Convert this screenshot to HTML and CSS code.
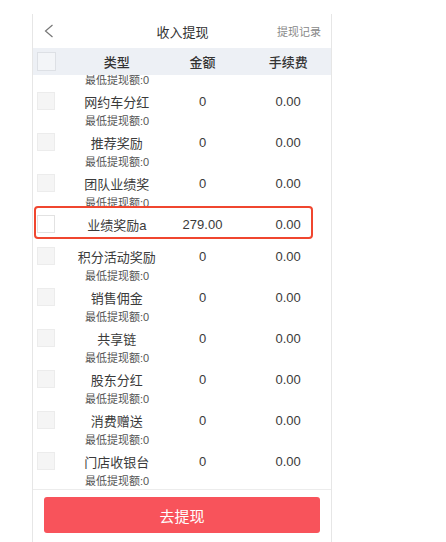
FILE: index.html
```html
<!DOCTYPE html>
<html lang="zh-CN">
<head>
    <meta charset="UTF-8">
    <meta name="viewport" content="width=device-width, initial-scale=1.0">
    <title>收入提现</title>
    <link rel="stylesheet" href="styles.css">
</head>
<body>
    <div class="phone">
        <div class="topbar">
            <span class="back">
                <svg width="10" height="14" viewBox="0 0 10 14"><polyline points="8.5,1 1.5,7 8.5,13" fill="none" stroke="#777" stroke-width="1.2"/></svg>
            </span>
            <span class="title">收入提现</span>
            <span class="record">提现记录</span>
        </div>

        <div class="thead grid">
            <span><i class="box box-head"></i></span>
            <span>类型</span>
            <span>金额</span>
            <span>手续费</span>
        </div>

        <div class="list">
            <div class="row-tail"><span class="min">最低提现额:0</span></div>

            <div class="row">
                <div class="line grid"><span><i class="box"></i></span><span>网约车分红</span><span>0</span><span>0.00</span></div>
                <div class="min">最低提现额:0</div>
            </div>
            <div class="row">
                <div class="line grid"><span><i class="box"></i></span><span>推荐奖励</span><span>0</span><span>0.00</span></div>
                <div class="min">最低提现额:0</div>
            </div>
            <div class="row">
                <div class="line grid"><span><i class="box"></i></span><span>团队业绩奖</span><span>0</span><span>0.00</span></div>
                <div class="min">最低提现额:0</div>
            </div>

            <!-- 标注的那一行 -->
            <div class="row row-mark">
                <div class="mark"></div>
                <div class="line grid"><span><i class="box box-white"></i></span><span>业绩奖励a</span><span>279.00</span><span>0.00</span></div>
            </div>

            <div class="row">
                <div class="line grid"><span><i class="box"></i></span><span>积分活动奖励</span><span>0</span><span>0.00</span></div>
                <div class="min">最低提现额:0</div>
            </div>
            <div class="row">
                <div class="line grid"><span><i class="box"></i></span><span>销售佣金</span><span>0</span><span>0.00</span></div>
                <div class="min">最低提现额:0</div>
            </div>
            <div class="row">
                <div class="line grid"><span><i class="box"></i></span><span>共享链</span><span>0</span><span>0.00</span></div>
                <div class="min">最低提现额:0</div>
            </div>
            <div class="row">
                <div class="line grid"><span><i class="box"></i></span><span>股东分红</span><span>0</span><span>0.00</span></div>
                <div class="min">最低提现额:0</div>
            </div>
            <div class="row">
                <div class="line grid"><span><i class="box"></i></span><span>消费赠送</span><span>0</span><span>0.00</span></div>
                <div class="min">最低提现额:0</div>
            </div>
            <div class="row">
                <div class="line grid"><span><i class="box"></i></span><span>门店收银台</span><span>0</span><span>0.00</span></div>
                <div class="min">最低提现额:0</div>
            </div>
        </div>

        <div class="foot">
            <button class="btn">去提现</button>
        </div>
    </div>
</body>
</html>
```

FILE: styles.css
```css
body {
    margin: 0;
    background-color: #fff;
    font-family: "Liberation Sans", "Noto Sans CJK SC", sans-serif;
    color: #333;
}
.phone {
    margin: 14px 0 0 32px;
    width: 300px;
    height: 528px;
    box-sizing: border-box;
    border-left: 1px solid #e6e6e6;
    border-right: 1px solid #e6e6e6;
    display: flex;
    flex-direction: column;
}
.topbar {
    height: 34px;
    display: grid;
    grid-template-columns: 1fr auto 1fr;
    align-items: center;
    padding: 0 10px 0 11px;
}
.back svg {
    display: block;
}
.title {
    font-size: 13px;
    color: #333;
}
.record {
    justify-self: end;
    font-size: 11px;
    color: #888;
}
.grid {
    display: grid;
    grid-template-columns: 41px 1fr 1fr 1fr;
    align-items: center;
    text-align: center;
}
.thead {
    height: 27px;
    background-color: #edf0f5;
    font-size: 13px;
    font-weight: 500;
    color: #333;
}
.box {
    display: block;
    width: 18px;
    height: 18px;
    margin-left: 4px;
    box-sizing: border-box;
    border: 1px solid #ececec;
    background-color: #f5f5f5;
}
.box-head {
    width: 19px;
    height: 19px;
    background-color: #f3f5f8;
    border-color: #dde0e5;
}
.box-white {
    background-color: #fff;
    border-color: #e2e2e2;
}
.list {
    height: 414px;
    overflow: hidden;
}
.row-tail {
    height: 15px;
    display: flex;
    align-items: flex-end;
    overflow: hidden;
}
.line {
    height: 22px;
    font-size: 13px;
    color: #3a3a3a;
}
.min {
    display: block;
    margin-left: 41px;
    width: 86px;
    height: 19px;
    line-height: 19px;
    text-align: center;
    font-size: 11px;
    color: #555;
}
.row-mark {
    position: relative;
    height: 32px;
}
.row-mark .line {
    position: relative;
    z-index: 1;
}
/* 红色标注框，盖在上一行的提示文字上 */
.mark {
    position: absolute;
    top: -7px;
    left: 1px;
    right: 18px;
    height: 33px;
    box-sizing: border-box;
    border: 2px solid #f0462f;
    border-radius: 4px;
    background-color: #fff;
    z-index: 0;
}
.foot {
    border-top: 1px solid #ececec;
    padding: 7px 11px 0 11px;
}
.btn {
    display: block;
    width: 100%;
    height: 36px;
    border: none;
    border-radius: 3px;
    background-color: #f8535b;
    color: #fff;
    font-family: "Liberation Sans", "Noto Sans CJK SC", sans-serif;
    font-size: 15px;
}
```
